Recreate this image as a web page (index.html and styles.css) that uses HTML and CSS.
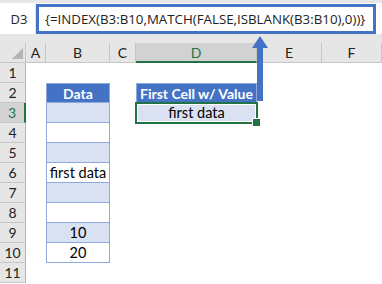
FILE: index.html
```html
<!DOCTYPE html>
<html>
<head>
<meta charset="utf-8">
<link rel="stylesheet" href="styles.css">
</head>
<body>
<div class="app">
  <div class="fbar">
    <div class="namebox">D3</div>
    <div class="fwrap"><div class="formula">{=INDEX(B3:B10,MATCH(FALSE,ISBLANK(B3:B10),0))}</div></div>
  </div>
  <div class="sheet">
    <div class="corner"></div>
    <div class="ch">A</div><div class="ch">B</div><div class="ch">C</div><div class="ch sel">D</div><div class="ch">E</div><div class="ch">F</div>

    <div class="rh">1</div><div></div><div></div><div></div><div></div><div></div><div></div>

    <div class="rh">2</div><div></div><div class="t thead top">Data</div><div></div><div class="t thead top">First Cell w/ Value</div><div></div><div></div>

    <div class="rh sel">3</div><div></div><div class="t band"></div><div></div><div class="t band active">first data</div><div></div><div></div>

    <div class="rh">4</div><div></div><div class="t"></div><div></div><div></div><div></div><div></div>

    <div class="rh">5</div><div></div><div class="t band"></div><div></div><div></div><div></div><div></div>

    <div class="rh">6</div><div></div><div class="t">first data</div><div></div><div></div><div></div><div></div>

    <div class="rh">7</div><div></div><div class="t band"></div><div></div><div></div><div></div><div></div>

    <div class="rh">8</div><div></div><div class="t"></div><div></div><div></div><div></div><div></div>

    <div class="rh">9</div><div></div><div class="t band">10</div><div></div><div></div><div></div><div></div>

    <div class="rh">10</div><div></div><div class="t">20</div><div></div><div></div><div></div><div></div>

    <div class="rh">11</div><div></div><div></div><div></div><div></div><div></div><div></div>
  </div>
  <svg class="arrow" width="20" height="70" viewBox="0 0 20 70">
    <polygon points="10,1 2,13 18,13" fill="#4472c4"/>
    <rect x="7" y="12" width="6" height="54" fill="#4472c4"/>
  </svg>
</div>
</body>
</html>
```

FILE: styles.css
```css
* { box-sizing: border-box; }
html, body { margin: 0; padding: 0; background: #fff; }
.app {
  position: relative;
  width: 382px;
  height: 284px;
  overflow: hidden;
  font-family: Lato, "Open Sans", sans-serif;
}
.fbar {
  display: flex;
  gap: 1px;
  height: 43px;
  padding: 3px 0 9px 0;
  background: #e6e6e6;
}
.namebox {
  width: 35px;
  background: #fff;
  display: flex;
  align-items: center;
  justify-content: center;
  font-family: "Open Sans", sans-serif;
  font-size: 13px;
  color: #222;
  padding-left: 3px;
}
.fwrap {
  flex: 1;
  background: #fff;
  padding: 1px 6px 0 0;
}
.formula {
  height: 30px;
  border: 3px solid #4472c4;
  display: flex;
  align-items: center;
  padding-left: 6px;
  font-family: "Open Sans", sans-serif;
  font-size: 13.3px;
  color: #222;
  white-space: nowrap;
}
.sheet {
  display: grid;
  grid-template-columns: 26px 20px 64px 26px 121px 65px 60px;
  grid-auto-rows: 20px;
  font-size: 14.5px;
  color: #000;
}
.corner {
  background: #e6e6e6;
  border-right: 1px solid #c6c6c6;
  border-bottom: 1px solid #c6c6c6;
  display: flex;
  align-items: flex-end;
  justify-content: flex-end;
  padding: 0 2px 3px 0;
}
.corner::after {
  content: "";
  width: 0;
  height: 0;
  border-left: 11px solid transparent;
  border-bottom: 11px solid #b4b4b4;
}
.ch, .rh {
  background: #e6e6e6;
  border-right: 1px solid #c6c6c6;
  border-bottom: 1px solid #c6c6c6;
  display: flex;
  align-items: center;
  justify-content: center;
  color: #222;
  font-size: 14px;
}
.ch.sel {
  background: #d2d2d2;
  color: #217346;
  border-bottom: 2px solid #217346;
}
.rh { border-right: 1px solid #b8b8b8; }
.rh.sel {
  background: #d2d2d2;
  color: #217346;
  border-right: 2px solid #217346;
}
.t {
  border-left: 1px solid #8ea9db;
  border-right: 1px solid #8ea9db;
  border-bottom: 1px solid #8ea9db;
  display: flex;
  align-items: center;
  justify-content: center;
  white-space: nowrap;
}
.t.top { border-top: 1px solid #8ea9db; }
.thead {
  background: #4472c4;
  color: #fff;
  font-weight: bold;
  font-size: 14px;
  border-color: #4472c4 #8ea9db #8ea9db #8ea9db;
}
.band { background: #d9e1f2; }
.active { position: relative; }
.active::after {
  content: "";
  position: absolute;
  left: -2px;
  top: -1px;
  right: -2px;
  bottom: -2px;
  border: 2px solid #217346;
  box-shadow: inset 0 0 0 1px #fff;
}
.active::before {
  content: "";
  position: absolute;
  right: -5px;
  bottom: -5px;
  width: 7px;
  height: 7px;
  background: #217346;
  border: 1px solid #fff;
  z-index: 2;
}
.arrow {
  position: absolute;
  left: 250px;
  top: 35px;
}
```
